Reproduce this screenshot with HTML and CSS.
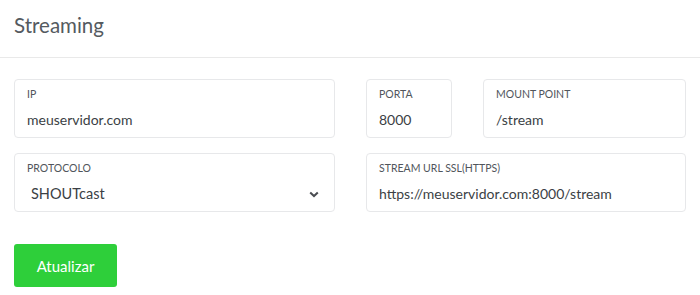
FILE: index.html
```html
<!DOCTYPE html>
<html lang="pt">
<head>
<meta charset="utf-8">
<title>Streaming</title>
<link rel="stylesheet" href="styles.css">
</head>
<body>
<div class="card">
  <div class="card-header"><h2 class="title">Streaming</h2></div>
  <div class="card-body">
    <div class="grid">
      <div class="field">
        <label class="label">IP</label>
        <div class="value">meuservidor.com</div>
      </div>
      <div class="pair">
        <div class="field">
          <label class="label">PORTA</label>
          <div class="value">8000</div>
        </div>
        <div class="field">
          <label class="label">MOUNT POINT</label>
          <div class="value">/stream</div>
        </div>
      </div>
      <div class="field">
        <label class="label">PROTOCOLO</label>
        <div class="select">
          <span class="select-text">SHOUTcast</span>
          <svg class="chevron" width="10" height="7" viewBox="0 0 10 7"><path d="M1.2 1.4 L5 5 L8.8 1.4" fill="none" stroke="#4a4d52" stroke-width="2"/></svg>
        </div>
      </div>
      <div class="field">
        <label class="label">STREAM URL SSL(HTTPS)</label>
        <div class="value">https://meuservidor.com:8000/stream</div>
      </div>
    </div>
    <button class="btn">Atualizar</button>
  </div>
</div>
</body>
</html>
```
FILE: styles.css
```css
* { box-sizing: border-box; }
html, body { margin: 0; padding: 0; background: #fff; }
body { font-family: Lato, "Open Sans", sans-serif; color: #3b3f45; }
.card-header { height: 58px; border-bottom: 1px solid #e9e9e9; padding: 0 14px; display: flex; align-items: center; }
.title { margin: 0; font-weight: 400; font-size: 20.5px; color: #545a60; line-height: 24px; position: relative; top: -4px; }
.card-body { padding: 21px 14px 0; }
.grid { display: grid; grid-template-columns: 321px 320px; column-gap: 31px; row-gap: 15px; }
.pair { display: grid; grid-template-columns: 86px 203px; column-gap: 31px; }
.field { border: 1px solid #e7e8ea; border-radius: 4px; height: 59px; padding: 6px 12px 0; }
.label { display: block; font-size: 10.5px; line-height: 16px; color: #50555b; }
.value { margin-top: 8px; font-size: 14px; line-height: 20px; color: #3b3f45; }
.select { margin-top: 8px; display: flex; align-items: center; justify-content: space-between; padding-left: 4px; padding-right: 3px; height: 20px; }
.select-text { font-size: 14.5px; line-height: 20px; color: #3b3f45; }
.chevron { display: block; }
.btn { margin-top: 32px; width: 103px; height: 43px; border: 0; border-radius: 3px; background: #2ecf3a; color: #fff; font-family: Lato, sans-serif; font-size: 15px; padding: 0; }
```
